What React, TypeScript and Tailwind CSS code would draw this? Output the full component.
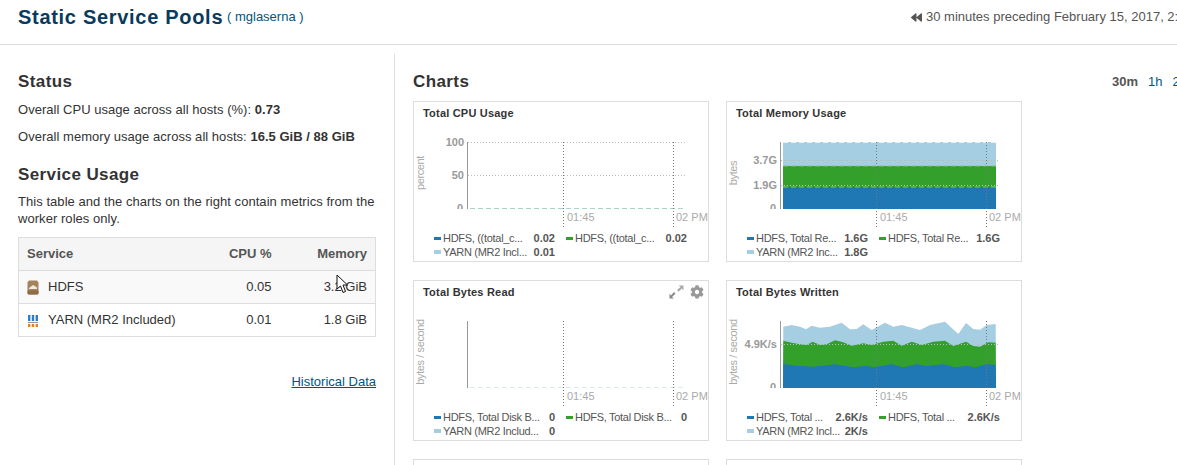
import React from 'react';
import { FaBackward, FaCog } from 'react-icons/fa';

const BLUE = '#1f77b4';
const GREEN = '#33a02c';
const LIGHT = '#a6cee3';

interface LegendItem {
  label: string;
  value: string;
  color: string;
}

interface ChartProps {
  title: string;
  yLabel: string;
  ticks: { label: string; y: number }[];
  legend: LegendItem[];
  showTools?: boolean;
  hideZero?: boolean;
  children?: React.ReactNode;
}

// reference traces for Total Bytes Written, read off the 3x crop
const toPoints = (pts: number[][]) => pts.map(([x, y]) => `${(x / 3 - 6).toFixed(1)},${(y / 3 - 5).toFixed(1)}`);
const lightTop = [[190, 155], [215, 150], [240, 155], [258, 163], [275, 152], [300, 158], [330, 155], [365, 143], [390, 163], [410, 162], [430, 148], [455, 165], [495, 143], [520, 155], [545, 150], [575, 158], [600, 165], [630, 150], [675, 140], [715, 177], [738, 144], [760, 162], [780, 164], [800, 150], [827, 147]];
const greenTop = [[190, 197], [215, 203], [240, 208], [260, 210], [278, 200], [300, 210], [320, 208], [345, 196], [370, 202], [395, 212], [430, 205], [455, 210], [490, 200], [520, 197], [545, 212], [575, 200], [605, 210], [640, 200], [675, 197], [700, 213], [738, 200], [760, 213], [780, 215], [805, 202], [827, 203]];
const blueTop = [[190, 267], [230, 272], [280, 275], [345, 268], [400, 277], [440, 272], [460, 277], [515, 268], [550, 277], [590, 268], [620, 273], [670, 268], [705, 277], [740, 272], [765, 277], [800, 268], [827, 270]];

const Chart: React.FC<ChartProps> = ({ title, yLabel, ticks, legend, showTools, hideZero, children }) => (
  <div className="relative flex h-[161px] w-[296px] flex-col border border-[#dddddd] bg-white">
    <div className="h-[25px] pl-[9px] pt-[4px] text-[11px] font-bold leading-[14px] tracking-[0.2px] text-[#333333]">{title}</div>
    {showTools && (
      <div className="absolute right-[4px] top-[4px] flex items-center gap-[6px] text-[#999999]">
        <svg width="15" height="14" viewBox="0 0 15 14">
          <path d="M8 5 L11.5 2 L9.5 0.5 L14.5 0.5 L14.5 5.5 L12.8 3.5 L9.5 6.8 Z" fill="#aaaaaa" />
          <path d="M6.5 8.5 L3 12 L5 13.5 L0.5 13.5 L0.5 8.5 L2 10.5 L5 7 Z" fill="#888888" />
        </svg>
        <FaCog size={14} />
      </div>
    )}
    <svg width="294" height="104" viewBox="1 26 294 104" className="block shrink-0">
      {children}
      <line x1="54.5" x2="54.5" y1="41" y2="108" stroke="#999999" />
      {ticks.map((t) => (
        <line key={t.label} x1="55" x2="274" y1={t.y + 0.5} y2={t.y + 0.5} stroke="#bbbbbb" strokeDasharray="1 2" />
      ))}
      {[150.5, 260.5].map((x) => (
        <line key={x} x1={x} x2={x} y1="41" y2="126" stroke="#777777" strokeDasharray="1 2" />
      ))}
      {ticks.map((t) => (
        <text key={t.label} x="51" y={t.y + 4} textAnchor="end" className="fill-[#999999] text-[11px] font-bold">
          {t.label}
        </text>
      ))}
      {!hideZero && (
        <>
          <text x="50" y="111" textAnchor="end" className="fill-[#999999] text-[11px] font-bold">0</text>
          <rect x="38" y="108" width="15" height="6" fill="white" />
        </>
      )}
      <text x="154" y="120" className="fill-[#aaaaaa] text-[11px]">01:45</text>
      <text x="263" y="120" className="fill-[#aaaaaa] text-[11px]">02 PM</text>
      <text
        transform="translate(11 72) rotate(-90)"
        textAnchor="middle"
        className="fill-[#aaaaaa] text-[11px] tracking-[-0.4px]"
      >
        {yLabel}
      </text>
    </svg>
    <div className="grid grid-cols-[132px_132px] pl-[20px] text-[11px] leading-[14px] text-[#555555]">
      {legend.map((item, i) => (
        <div key={i} className="flex h-[14px] w-[121px] items-center">
          <span className={`w-[7px] shrink-0 ${i === 2 ? 'h-[4px]' : 'h-[3px]'}`} style={{ backgroundColor: item.color }} />
          <span className="ml-[2px] flex-1 whitespace-nowrap tracking-[-0.3px]">{item.label}</span>
          <span className="font-bold">{item.value}</span>
        </div>
      ))}
    </div>
  </div>
);

const HdfsIcon = () => (
  <svg width="12" height="15" viewBox="0 0 12 15" className="mr-[9px] shrink-0">
    <path d="M2 0.5 H10 L11.5 2.5 V13 L10 14.5 H2 L0.5 13 V2.5 Z" fill="#a5835a" />
    <path d="M2 8 L6 5 L10 7.5 V9 H2 Z" fill="#eeeae2" />
    <rect x="0.5" y="10.5" width="11" height="4" rx="1" fill="#8e6d46" />
  </svg>
);

const YarnIcon = () => (
  <svg width="12" height="13" viewBox="0 0 12 13" className="mr-[9px] shrink-0">
    <g fill="#2f7fc8">
      <rect x="1" y="1" width="2.4" height="6" />
      <rect x="4.8" y="1" width="2.4" height="6" />
      <rect x="8.6" y="1" width="2.4" height="6" />
    </g>
    <rect x="1" y="8" width="10" height="1" fill="#999999" />
    <g fill="#f07f16">
      <rect x="1" y="10" width="2.4" height="3" />
      <rect x="4.8" y="10" width="2.4" height="3" />
      <rect x="8.6" y="10" width="2.4" height="3" />
    </g>
  </svg>
);

const rows = [
  { name: 'HDFS', icon: <HdfsIcon />, cpu: '0.05', memory: '3.2 GiB', bg: 'bg-[#f9f9f9]' },
  { name: 'YARN (MR2 Included)', icon: <YarnIcon />, cpu: '0.01', memory: '1.8 GiB', bg: 'bg-white' },
];

export default function App() {
  return (
    <div className="h-[465px] w-[1177px] overflow-hidden bg-white font-['Liberation_Sans',Arial,sans-serif] text-[13px] text-[#333333]">
      <header className="flex h-[45px] items-start border-b border-[#dddddd] pl-[18px] whitespace-nowrap">
        <h1 className="mt-[4px] w-[204px] shrink-0 text-[20px] font-bold leading-[26px] tracking-[0.7px] text-[#0a3a5c]">Static Service Pools</h1>
        <span className="ml-[5px] mt-[9px] w-[684px] shrink-0 leading-[16px] text-[#005580]">( mglaserna )</span>
        <FaBackward size={11} className="mt-[12px] shrink-0 text-[#555555]" />
        <span className="ml-[4px] mt-[9px] shrink-0 leading-[16px] text-[#555555]">30 minutes preceding February 15, 2017, 2:00 PM CST</span>
      </header>

      <div className="flex">
        <aside className="mt-[9px] h-[420px] w-[395px] shrink-0 border-r border-[#dddddd] pl-[18px] pr-[18px]">
          <h2 className="mt-[17px] text-[17px] font-bold leading-[22px] tracking-[0.4px] text-[#333333]">Status</h2>
          <p className="mt-[9px] leading-[16px] tracking-[0.03px]">Overall CPU usage across all hosts (%): <b>0.73</b></p>
          <p className="mt-[11px] leading-[16px] tracking-[0.03px]">Overall memory usage across all hosts: <b>16.5 GiB / 88 GiB</b></p>
          <h2 className="mt-[19px] text-[17px] font-bold leading-[22px] tracking-[0.4px] text-[#333333]">Service Usage</h2>
          <p className="mt-[7px] leading-[17px] tracking-[0.05px]">This table and the charts on the right contain metrics from the worker roles only.</p>
          <table className="mt-[10px] w-[358px] border-collapse border border-[#dddddd]">
            <thead>
              <tr className="h-[33px] bg-[#f5f5f5] text-[#555555]">
                <th className="pl-[8px] text-left font-bold">Service</th>
                <th className="w-[80px] text-right font-bold">CPU %</th>
                <th className="w-[104px] pr-[8px] text-right font-bold">Memory</th>
              </tr>
            </thead>
            <tbody>
              {rows.map((r) => (
                <tr key={r.name} className={`h-[33px] border-t border-[#dddddd] ${r.bg}`}>
                  <td className="pl-[8px]">
                    <div className="flex items-center">
                      {r.icon}
                      {r.name}
                    </div>
                  </td>
                  <td className="text-right">{r.cpu}</td>
                  <td className="pr-[8px] text-right">
                    <span className="relative">
                      {r.memory}
                      {r.name === 'HDFS' && (
                        <svg width="13" height="20" viewBox="0 0 13 20" className="absolute left-[12px] top-[-5px]">
                          <path d="M1 1 L1 15 L4.5 12 L7 18.5 L9.5 17.5 L7 11 L11.5 11 Z" fill="white" stroke="#111111" strokeWidth="1" />
                        </svg>
                      )}
                    </span>
                  </td>
                </tr>
              ))}
            </tbody>
          </table>
          <div className="mt-[35px] text-right">
            <a className="text-[#005580] underline">Historical Data</a>
          </div>
        </aside>

        <main className="pl-[18px] pt-[26px]">
          <div className="flex w-[764px] items-center justify-between">
            <h2 className="text-[17px] font-bold leading-[22px] tracking-[0.4px] text-[#333333]">Charts</h2>
            <div className="flex w-[65px] gap-[10px] overflow-hidden whitespace-nowrap">
              <span className="font-bold text-[#555555]">30m</span>
              <a className="text-[#005580]">1h</a>
              <a className="text-[#005580]">2h</a>
            </div>
          </div>
          <div className="mt-[8px] grid grid-cols-[296px_296px] gap-x-[17px] gap-y-[18px]">
            <Chart
              title="Total CPU Usage"
              yLabel="percent"
              ticks={[{ label: '100', y: 41 }, { label: '50', y: 74 }]}
              legend={[
                { label: 'HDFS, ((total_c...', value: '0.02', color: BLUE },
                { label: 'HDFS, ((total_c...', value: '0.02', color: GREEN },
                { label: 'YARN (MR2 Incl...', value: '0.01', color: LIGHT },
              ]}
            >
              <line x1="57" x2="270" y1="107.5" y2="107.5" stroke="#a8d5c8" strokeDasharray="5 3" />
            </Chart>
            <Chart
              title="Total Memory Usage"
              yLabel="bytes"
              ticks={[{ label: '3.7G', y: 59 }, { label: '1.9G', y: 84 }]}
              legend={[
                { label: 'HDFS, Total Re...', value: '1.6G', color: BLUE },
                { label: 'HDFS, Total Re...', value: '1.6G', color: GREEN },
                { label: 'YARN (MR2 Inc...', value: '1.8G', color: LIGHT },
              ]}
            >
              <rect x="57" y="41" width="213" height="24" fill={LIGHT} />
              <rect x="57" y="65" width="213" height="21" fill={GREEN} />
              <rect x="57" y="86" width="213" height="22" fill={BLUE} />
              <line x1="57" x2="270" y1="41.5" y2="41.5" stroke="#e4eff5" strokeDasharray="5 3" />
              <line x1="57" x2="270" y1="65" y2="65" stroke="#7fc47a" strokeDasharray="5 3" />
              <line x1="57" x2="270" y1="86" y2="86" stroke="#7fc47a" strokeDasharray="5 3" />
            </Chart>
            <Chart
              title="Total Bytes Read"
              yLabel="bytes / second"
              ticks={[]}
              showTools
              hideZero
              legend={[
                { label: 'HDFS, Total Disk B...', value: '0', color: BLUE },
                { label: 'HDFS, Total Disk B...', value: '0', color: GREEN },
                { label: 'YARN (MR2 Includ...', value: '0', color: LIGHT },
              ]}
            >
              <line x1="57" x2="270" y1="107.5" y2="107.5" stroke="#d5ebe5" strokeDasharray="5 3" />
            </Chart>
            <Chart
              title="Total Bytes Written"
              yLabel="bytes / second"
              ticks={[{ label: '4.9K/s', y: 64 }]}
              legend={[
                { label: 'HDFS, Total ...', value: '2.6K/s', color: BLUE },
                { label: 'HDFS, Total ...', value: '2.6K/s', color: GREEN },
                { label: 'YARN (MR2 Incl...', value: '2K/s', color: LIGHT },
              ]}
            >
              <polygon points={`57,108 ${toPoints(lightTop).join(' ')} 270,108`} fill={LIGHT} />
              <polygon points={`57,108 ${toPoints(greenTop).join(' ')} 270,108`} fill={GREEN} />
              <polygon points={`57,108 ${toPoints(blueTop).join(' ')} 270,108`} fill={BLUE} />
            </Chart>
            <div className="h-[161px] w-[296px] border border-[#dddddd]" />
            <div className="h-[161px] w-[296px] border border-[#dddddd]" />
          </div>
        </main>
      </div>
    </div>
  );
}
